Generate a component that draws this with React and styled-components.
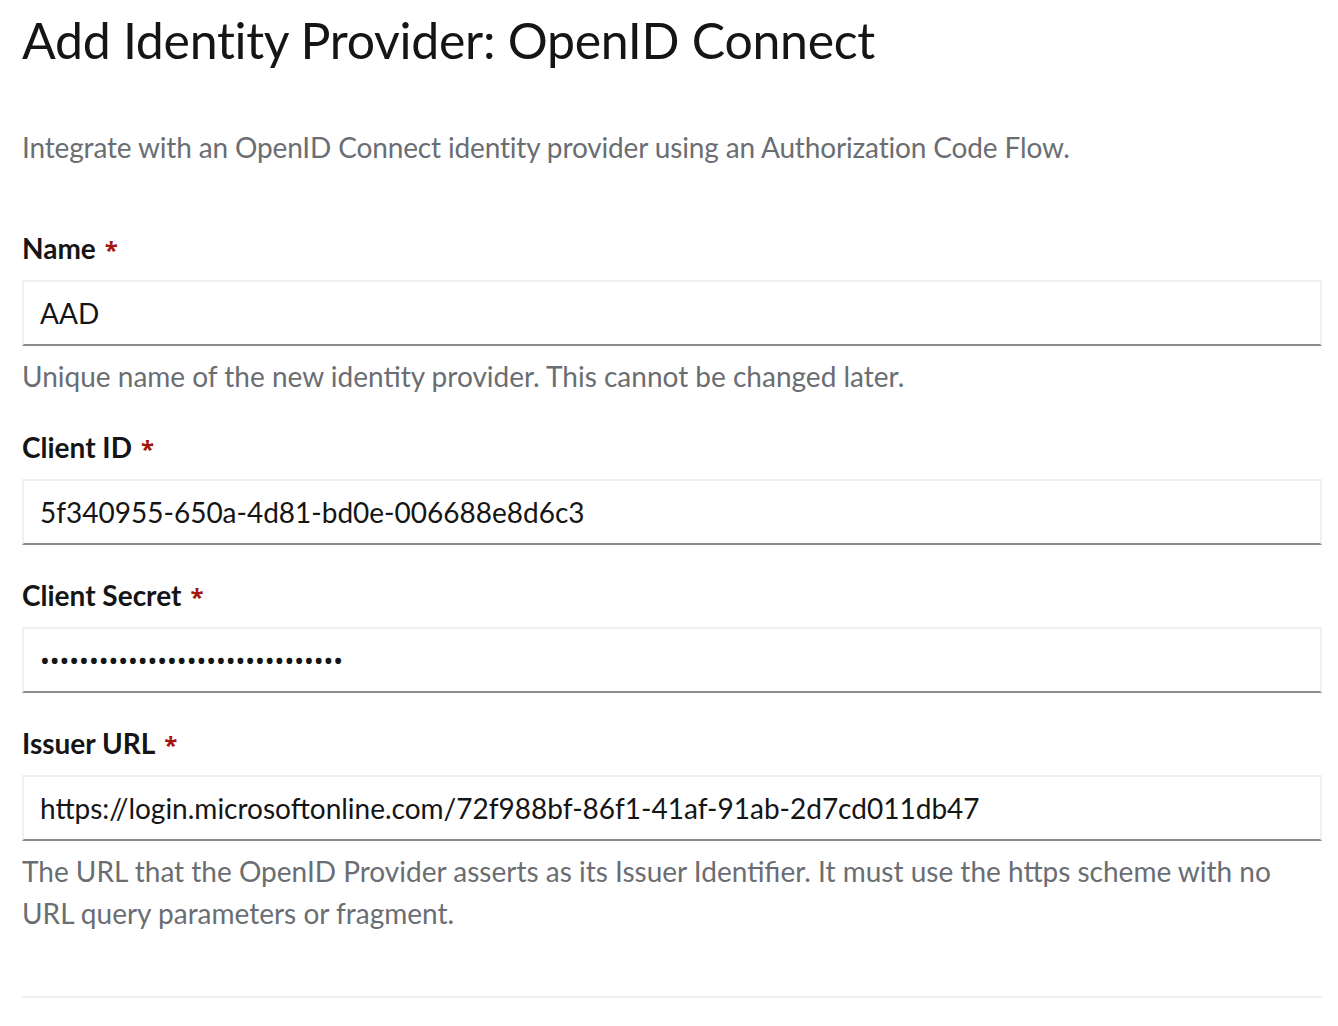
import React from 'react';
import styled, { createGlobalStyle } from 'styled-components';

const GlobalStyle = createGlobalStyle`
  body {
    margin: 0;
    background: #fff;
    font-family: Lato, "Noto Sans", sans-serif;
    color: #151515;
  }
`;

const Page = styled.div`
  padding: 6px 16px 0 22px;
`;

const Title = styled.h1`
  margin: 0;
  font-size: 50px;
  line-height: 68px;
  font-weight: 400;
  letter-spacing: -0.3px;
`;

const Description = styled.p`
  margin: 52px 0 0;
  font-size: 28px;
  line-height: 42px;
  color: #6a6e73;
  letter-spacing: -0.15px;
`;

const Form = styled.form`
  display: flex;
  flex-direction: column;
  gap: 29px;
  margin-top: 59px;
  padding-bottom: 62px;
  border-bottom: 2px solid #f0f0f0;
`;

const Group = styled.div`
  display: flex;
  flex-direction: column;
`;

const Label = styled.label`
  height: 42px;
  font-size: 28px;
  line-height: 42px;
  font-weight: 700;
  margin-bottom: 11px;
`;

const Required = styled.span`
  font-family: "Noto Sans", sans-serif;
  font-size: 24px;
  line-height: 0;
  font-weight: 700;
  color: #a4160b;
  margin-left: 9px;
`;

const Input = styled.input`
  box-sizing: border-box;
  width: 100%;
  height: 66px;
  padding: 0 16px;
  font-family: ${(p) => (p.type === 'password' ? '"Noto Sans", sans-serif' : 'inherit')};
  font-size: ${(p) => (p.type === 'password' ? '26px' : '28px')};
  color: #151515;
  background: #fff;
  border: 2px solid #f0f0f0;
  border-bottom-color: #8a8d90;
  border-radius: 0;
  outline: none;
`;

const Helper = styled.div`
  margin-top: 9px;
  font-size: 28px;
  line-height: 42px;
  color: #6a6e73;
`;

const fields = [
  {
    id: 'name',
    label: 'Name',
    value: 'AAD',
    helper: 'Unique name of the new identity provider. This cannot be changed later.',
  },
  { id: 'clientId', label: 'Client ID', value: '5f340955-650a-4d81-bd0e-006688e8d6c3' },
  { id: 'clientSecret', label: 'Client Secret', value: 'abcdefghijklmnopqrstuvwxyz01234', type: 'password' },
  {
    id: 'issuer',
    label: 'Issuer URL',
    value: 'https://login.microsoftonline.com/72f988bf-86f1-41af-91ab-2d7cd011db47',
    helper:
      'The URL that the OpenID Provider asserts as its Issuer Identifier. It must use the https scheme with no URL query parameters or fragment.',
  },
];

export default function App() {
  return (
    <>
      <GlobalStyle />
      <Page>
        <Title>Add Identity Provider: OpenID Connect</Title>
        <Description>
          Integrate with an OpenID Connect identity provider using an Authorization Code Flow.
        </Description>
        <Form onSubmit={(e) => e.preventDefault()}>
          {fields.map((f) => (
            <Group key={f.id}>
              <Label htmlFor={f.id}>
                {f.label}
                <Required>*</Required>
              </Label>
              <Input id={f.id} type={f.type || 'text'} defaultValue={f.value} readOnly />
              {f.helper && <Helper>{f.helper}</Helper>}
            </Group>
          ))}
        </Form>
      </Page>
    </>
  );
}
